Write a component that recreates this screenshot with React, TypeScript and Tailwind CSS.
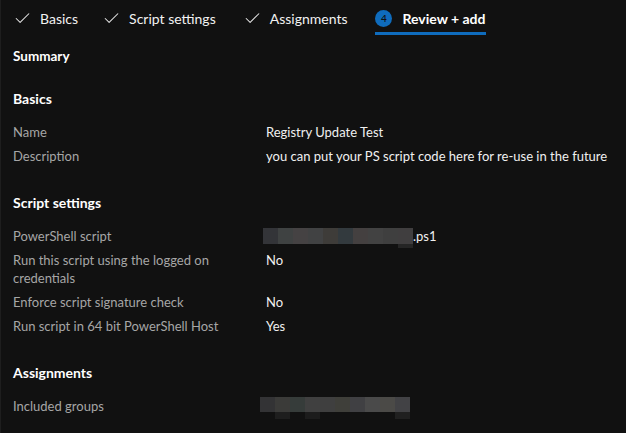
import { Check } from 'lucide-react';

const font = { fontFamily: 'Lato, "Noto Sans", sans-serif' };

function DoneStep({ label }: { label: string }) {
  return (
    <div className="flex items-center gap-[8px] h-[34px]">
      <Check size={19} strokeWidth={1.3} className="text-[#e8e8e8]" />
      <span className="text-[14px] text-[#f2f2f2]">{label}</span>
    </div>
  );
}

function Row({ label, children }: { label: string; children: React.ReactNode }) {
  return (
    <div className="flex py-[3px] text-[13px] leading-[18px]">
      <div className="w-[253px] shrink-0 pr-[30px] text-[#a6a6a6]">{label}</div>
      <div className="flex-1 h-auto whitespace-nowrap text-[#f0f0f0]">{children}</div>
    </div>
  );
}

function ScriptBlur() {
  return (
    <span className="flex items-start h-[18px] ml-[-3px]">
      <span className="flex flex-col mt-[1px]">
        <span className="flex h-[16px]">
          <span className="w-[15px] bg-[#333438]" />
          <span className="w-[15px] bg-[#3f4242]" />
          <span className="w-[15px] bg-[#454243]" />
          <span className="w-[15px] bg-[#414243]" />
          <span className="w-[15px] bg-[#3e3c39]" />
          <span className="w-[15px] bg-[#333a3e]" />
          <span className="w-[15px] bg-[#444040]" />
          <span className="w-[15px] bg-[#424242]" />
          <span className="w-[15px] bg-[#3f3f3f]" />
          <span className="w-[15px] bg-[#403e3f]" />
        </span>
        <span className="flex h-[4px] justify-end">
          <span className="w-[15px] bg-[#252525]" />
        </span>
      </span>
      <span>.ps1</span>
    </span>
  );
}

function GroupBlur() {
  return (
    <span className="flex flex-col h-[18px] ml-[-6px]">
      <span className="flex h-[15px] shrink-0">
        <span className="w-[15px] bg-[#333335]" />
        <span className="w-[15px] bg-[#3b3b39]" />
        <span className="w-[15px] bg-[#363c3a]" />
        <span className="w-[15px] bg-[#404040]" />
        <span className="w-[15px] bg-[#3f3f3f]" />
        <span className="w-[15px] bg-[#3f3f3a]" />
        <span className="w-[15px] bg-[#404043]" />
        <span className="w-[15px] bg-[#4a4a4a]" />
        <span className="w-[15px] bg-[#4b4a47]" />
        <span className="w-[15px] bg-[#424245]" />
      </span>
      <span className="flex h-[7px] shrink-0">
        <span className="w-[15px]" />
        <span className="w-[15px] bg-[#1e1e1e]" />
        <span className="w-[15px]" />
        <span className="w-[15px] bg-[#1c1c1c]" />
        <span className="w-[75px]" />
        <span className="w-[15px] bg-[#202020]" />
      </span>
    </span>
  );
}

export default function App() {
  return (
    <div style={font} className="w-[626px] h-[433px] bg-[#111111] border-l border-[#1e1e1e] overflow-hidden">
      <div className="flex items-center pl-[12px] pt-[1px]">
        <DoneStep label="Basics" />
        <div className="w-[24px]" />
        <DoneStep label="Script settings" />
        <div className="w-[27px]" />
        <DoneStep label="Assignments" />
        <div className="w-[28px]" />
        <div className="flex items-center gap-[10px] h-[34px] border-b-[3px] border-[#0f6cbd] pt-[3px]">
          <span className="w-[17px] h-[17px] rounded-full bg-[#0f6cbd] text-[10px] leading-[17px] text-center text-[#111] font-semibold">4</span>
          <span className="text-[14px] font-bold text-white">Review + add</span>
        </div>
      </div>

      <div className="px-[12px]">
        <h2 className="mt-[12px] text-[13.5px] font-bold text-white leading-[18px]">Summary</h2>

        <h3 className="mt-[25px] mb-[12px] text-[14px] font-bold text-white leading-[18px]">Basics</h3>
        <Row label="Name">Registry Update Test</Row>
        <Row label="Description">you can put your PS script code here for re-use in the future</Row>

        <h3 className="mt-[26px] mb-[12px] text-[14px] font-bold text-white leading-[18px]">Script settings</h3>
        <Row label="PowerShell script"><ScriptBlur /></Row>
        <Row label="Run this script using the logged on credentials">No</Row>
        <Row label="Enforce script signature check">No</Row>
        <Row label="Run script in 64 bit PowerShell Host">Yes</Row>

        <h3 className="mt-[26px] mb-[12px] text-[14px] font-bold text-white leading-[18px]">Assignments</h3>
        <Row label="Included groups"><GroupBlur /></Row>
      </div>
    </div>
  );
}
